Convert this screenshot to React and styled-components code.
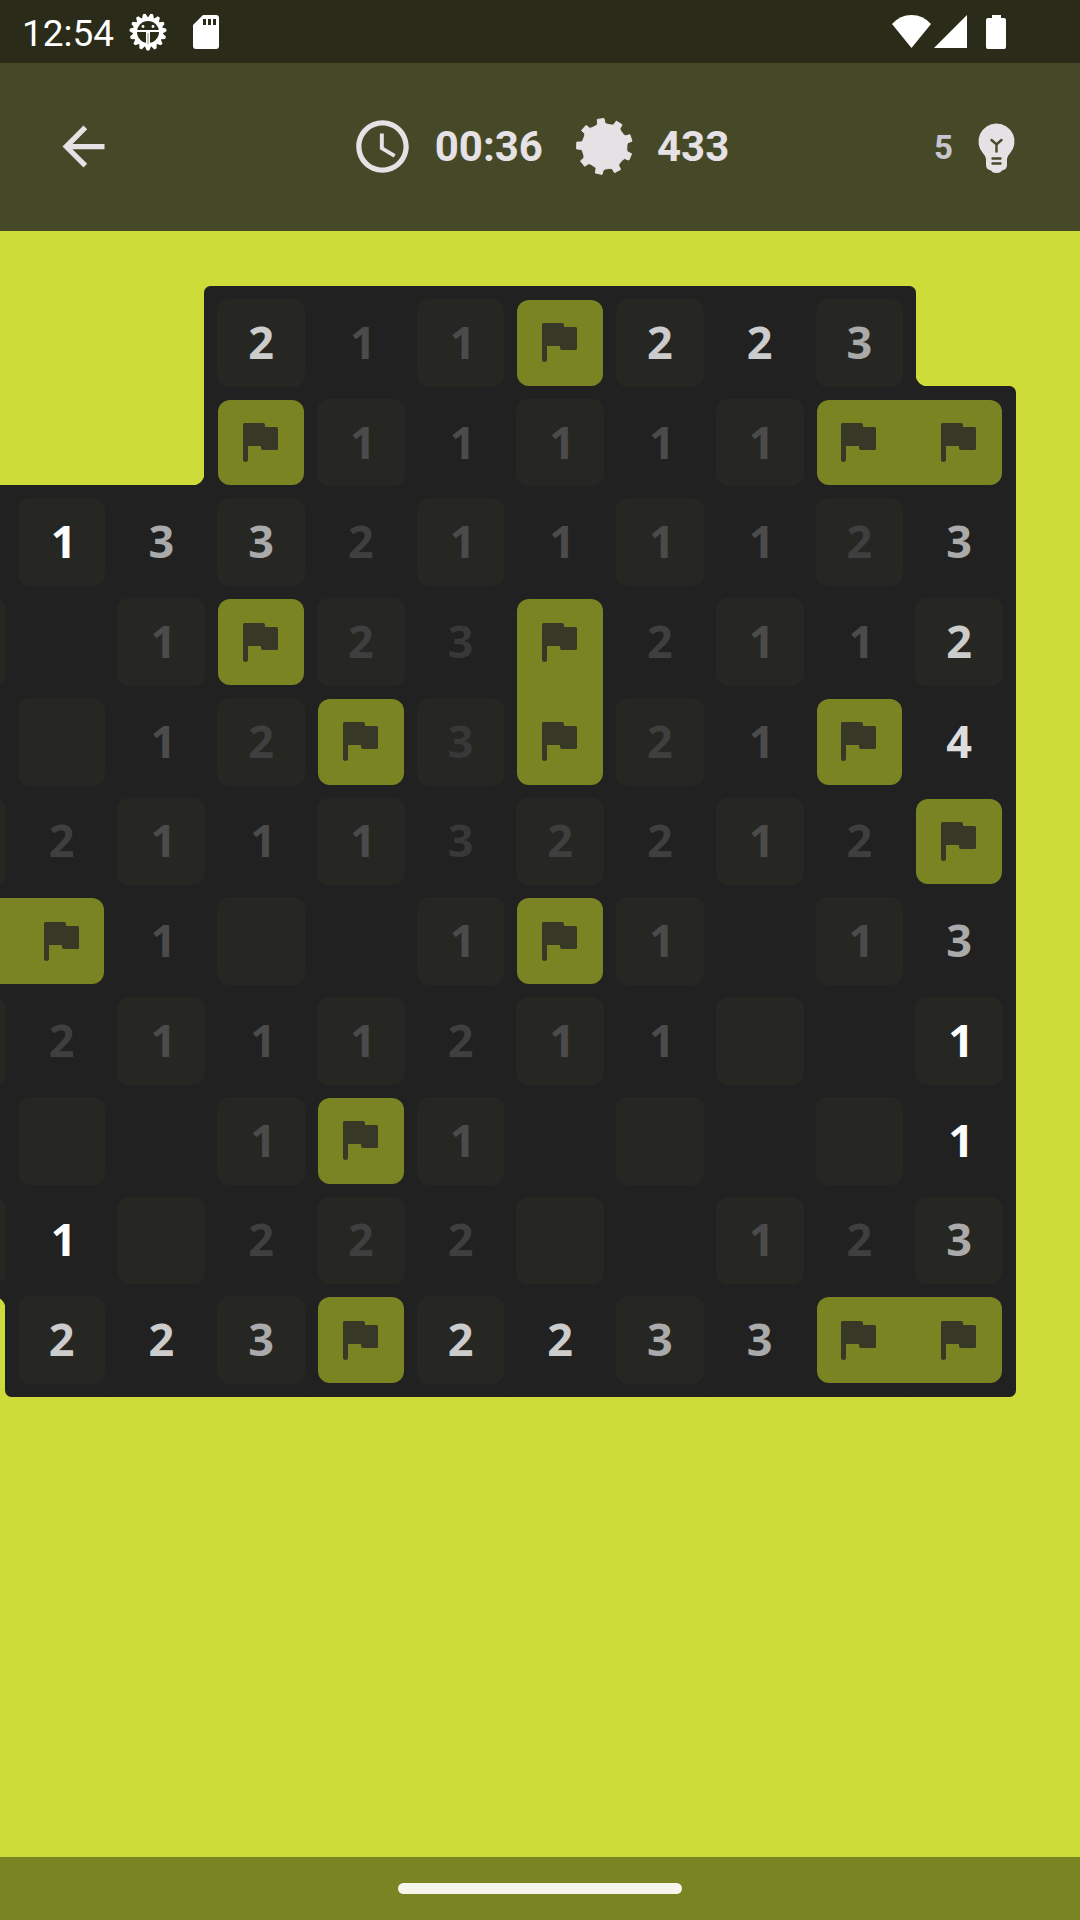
import React from "react";
import styled, { createGlobalStyle, css } from "styled-components";

const DARK = "#212121";
const LIME = "#cddc39";
const INK = "#e6e1e5";

const GlobalStyle = createGlobalStyle`
  *, *::before, *::after { box-sizing: border-box; }
  body {
    margin: 0;
    background: ${LIME};
    font-family: Roboto, "Liberation Sans", sans-serif;
  }
  button {
    margin: 0;
    padding: 0;
    border: 0;
    background: none;
    font: inherit;
    color: inherit;
    cursor: pointer;
  }
  svg { display: block; flex: none; }
`;

const Screen = styled.div`
  display: flex;
  flex-direction: column;
  min-height: 100vh;
  background: ${LIME};
  overflow: hidden;
`;

const StatusBar = styled.div`
  display: flex;
  align-items: center;
  justify-content: space-between;
  height: 63px;
  padding: 0 74px 0 22px;
  background: #2a2b19;
  color: #fff;
`;

const StatusGroup = styled.div`
  display: flex;
  align-items: center;
  gap: ${(p) => p.$gap}px;
`;

const SystemTime = styled.time`
  font-size: 37px;
  line-height: 42px;
  padding-top: 4px;
`;

const Toolbar = styled.header`
  display: grid;
  grid-template-columns: 1fr auto 1fr;
  align-items: center;
  height: 168px;
  padding: 0 52px 2px;
  background: #454927;
  color: ${INK};
`;

const BackButton = styled.button`
  justify-self: start;
`;

const Stats = styled.div`
  display: flex;
  gap: 30px;
`;

const Stat = styled.div`
  display: flex;
  align-items: center;
  gap: 21px;
  font-size: 42px;
  line-height: 48px;
  font-weight: 700;
`;

const StatValue = styled.span`
  padding-top: 2px;
`;

const HintButton = styled.button`
  display: flex;
  align-items: center;
  justify-self: end;
  gap: 12px;
`;

const HintCount = styled.span`
  padding-top: 4px;
  font-size: 33px;
  line-height: 40px;
  font-weight: 700;
  color: #cac4d0;
`;

const Field = styled.main`
  flex: 1;
  padding: 62px 71px 62px 0;
`;

const Board = styled.div`
  display: grid;
  grid-template-columns: repeat(11, minmax(0, 1fr));
  grid-template-rows: repeat(11, minmax(0, 1fr));
  aspect-ratio: 1;
  margin-left: -88px;
`;

const Void = styled.div`
  display: flex;
  padding: 6px;
  align-items: ${(p) => (p.$corner && p.$corner.includes("bottom") ? "flex-end" : "flex-start")};
  justify-content: ${(p) => (p.$corner && p.$corner.includes("right") ? "flex-end" : "flex-start")};
`;

const opposite = {
  "bottom right": "left top",
  "bottom left": "right top",
  "top right": "left bottom",
};

const Fillet = styled.span`
  width: 13px;
  height: 13px;
  background: radial-gradient(
    circle at ${(p) => opposite[p.$corner]},
    transparent 12px,
    ${DARK} 13px
  );
`;

const Cell = styled.div`
  display: grid;
  background: ${DARK};
  border-radius: 2px;
  box-shadow: 0 0 0 7px ${DARK};
`;

const digitColors = {
  lit: { 1: "#ffffff", 2: "#cccccc", 3: "#aaaaaa", 4: "#dedede" },
  dim: { 1: "#4b4b4b", 2: "#3f3f3f", 3: "#383838" },
};

/* The 1 sits left in its advance width, so it gets padding to look centred. */
const NumberTile = styled.button`
  position: relative;
  z-index: 1;
  margin: 6px;
  border-radius: 12px;
  background: ${(p) => (p.$shaded ? "#262722" : "transparent")};
  color: ${(p) => digitColors[p.$lit ? "lit" : "dim"][p.$value]};
  font-family: "Open Sans", "Noto Sans", sans-serif;
  font-size: 45px;
  line-height: 58px;
  padding-bottom: 2px;
  padding-left: ${(p) => (p.$value === "1" ? 4 : 0)}px;
  font-weight: 700;
`;

const FlagTile = styled.button`
  position: relative;
  z-index: 1;
  display: grid;
  place-items: center;
  margin: 7px;
  border-radius: 12px;
  background: #7a8422;
  color: #383827;
  ${(p) => p.$join === "right" && css`
    margin-right: -1px;
    padding-right: 8px;
    border-top-right-radius: 0;
    border-bottom-right-radius: 0;
  `}
  ${(p) => p.$join === "left" && css`
    margin-left: 0;
    padding-left: 7px;
    border-top-left-radius: 0;
    border-bottom-left-radius: 0;
  `}
  ${(p) => p.$join === "down" && css`
    margin-bottom: -1px;
    padding-bottom: 8px;
    border-bottom-left-radius: 0;
    border-bottom-right-radius: 0;
  `}
  ${(p) => p.$join === "up" && css`
    margin-top: 0;
    padding-top: 7px;
    border-top-left-radius: 0;
    border-top-right-radius: 0;
  `}
`;

const NavBar = styled.footer`
  display: flex;
  justify-content: center;
  align-items: center;
  height: 63px;
  background: #7a8422;
`;

const HomeHandle = styled.span`
  width: 284px;
  height: 11px;
  border-radius: 6px;
  background: #f5f5ec;
`;

/* Points of a cog outline: each tooth is a list of [angle offset, radius]. */
const cogPoints = (cx, cy, teeth, start, profile) => {
  const step = 360 / teeth;
  const out = [];
  for (let i = 0; i < teeth; i += 1) {
    profile.forEach(([offset, r]) => {
      const a = ((start + i * step + offset) * Math.PI) / 180;
      out.push(`${(cx + r * Math.cos(a)).toFixed(2)},${(cy + r * Math.sin(a)).toFixed(2)}`);
    });
  }
  return out.join(" ");
};

const MineIcon = () => (
  <svg width="63" height="63" viewBox="0 0 63 63" fill="currentColor" stroke="currentColor" strokeLinejoin="round" aria-hidden="true">
    <polygon
      strokeWidth="1"
      points={cogPoints(31.5, 31.5, 9, -98, [[-14, 22.5], [-9, 23.5], [-7, 28], [7, 28], [9, 23.5], [14, 22.5]])}
    />
  </svg>
);

const ClockIcon = () => (
  <svg width="63" height="63" viewBox="0 0 24 24" fill="currentColor" aria-hidden="true">
    <path d="M11.99 2C6.47 2 2 6.48 2 12s4.47 10 9.99 10C17.52 22 22 17.52 22 12S17.52 2 11.99 2zM12 20c-4.42 0-8-3.58-8-8s3.58-8 8-8 8 3.58 8 8-3.58 8-8 8z" />
    <path d="M12.5 7H11v6l5.25 3.15.75-1.23-4.5-2.67z" />
  </svg>
);

const BackIcon = () => (
  <svg width="63" height="63" viewBox="0 0 24 24" fill="currentColor" aria-hidden="true">
    <path d="M20 11H7.83l5.59-5.59L12 4l-8 8 8 8 1.41-1.41L7.83 13H20v-2z" />
  </svg>
);

const BulbIcon = () => (
  <svg width="63" height="63" viewBox="0 0 63 63" aria-hidden="true">
    <path
      fill="currentColor"
      d="M31.500 8.500a18 18 0 0 1 13.200 30.300Q42 41.500 42 44v6q0 4.500-5 5.500-1.500 2.500-5.500 2.500t-5.500-2.500q-5-1-5-5.500v-6q0-2.500-2.700-5.200A18 18 0 0 1 31.500 8.500z"
    />
    <path
      d="M26.500 25l5 4.500 5-4.500M31.500 29.500v7M27.500 43.500h8M27.500 48.500h8"
      fill="none"
      stroke="#454927"
      strokeWidth="2.400"
      strokeLinecap="round"
    />
  </svg>
);

const FlagIcon = () => (
  <svg width="36" height="39" viewBox="0 0 36 39" fill="currentColor" aria-hidden="true">
    <path d="M1.500 0H20q2 0 2 2v2H33.500q1.500 0 1.500 1.500v20q0 1.500-1.500 1.500H20q-2 0-2-2v-2H5v14q0 2-2.500 2T0 37V1.500Q0 0 1.500 0z" />
  </svg>
);

const DebugIcon = () => (
  <svg width="38" height="38" viewBox="0 0 38 38" aria-hidden="true">
    <polygon fill="currentColor" points={cogPoints(19, 19, 15, 90, [[-11, 15], [-4, 18.5], [4, 18.5], [11, 15]])} />
    <circle cx="19" cy="19" r="11" fill="#2a2b19" />
    <path d="M7 18h24" stroke="currentColor" strokeWidth="2" />
    <path d="M19 19v12" stroke="currentColor" strokeWidth="4" />
    <path d="M19 20v11" stroke="#8f8f87" strokeWidth="1" />
    <circle cx="14" cy="13.500" r="1.400" fill="currentColor" />
    <circle cx="24" cy="13.500" r="1.400" fill="currentColor" />
  </svg>
);

const CardIcon = () => (
  <svg width="26" height="34" viewBox="0 0 26 34" aria-hidden="true">
    <path fill="currentColor" d="M10 0H23q3 0 3 3v28q0 3-3 3H3q-3 0-3-3V10z" />
    <path stroke="#2a2b19" strokeWidth="3" d="M11.500 4v6M16.500 4v6M21.500 4v6" />
  </svg>
);

const WifiIcon = () => (
  <svg width="39" height="34" viewBox="0 0 39 34" fill="currentColor" aria-hidden="true">
    <path d="M0 9Q8 0 19.500 0T39 9L19.500 33z" />
  </svg>
);

const SignalIcon = () => (
  <svg width="33" height="34" viewBox="0 0 33 34" fill="currentColor" aria-hidden="true">
    <path d="M0 33L33 0v33z" />
  </svg>
);

const BatteryIcon = () => (
  <svg width="20" height="34" viewBox="0 0 20 34" fill="currentColor" aria-hidden="true">
    <path d="M6 0h9v3h3q2 0 2 2v27q0 2-2 2H2q-2 0-2-2V5q0-2 2-2h4z" />
  </svg>
);

/*
 * Rows of the level. "#" is outside the board, "." an opened blank,
 * "*" a flag; flags that touch are < > side by side and ^ v stacked.
 * A "!" after a number means that it is still lit.
 */
const LEVEL = [
  "# # # 2! 1 1 * 2! 2! 3! #",
  "# # # * 1 1 1 1 1 < >",
  ". 1! 3! 3! 2 1 1 1 1 2 3!",
  ". . 1 * 2 3 ^ 2 1 1 2!",
  ". . 1 2 * 3 v 2 1 * 4!",
  ". 2 1 1 1 3 2 2 1 2 *",
  "< > 1 . . 1 * 1 . 1 3!",
  ". 2 1 1 1 2 1 1 . . 1!",
  ". . . 1 * 1 . . . . 1!",
  ". 1! . 2 2 2 . . 1 2 3!",
  "# 2! 2! 3! * 2! 2! 3! 3! < >",
].map((row) => row.split(" "));

const JOINS = { "<": "right", ">": "left", "^": "down", v: "up" };

const CORNERS = {
  "1-2": "bottom right",
  "0-10": "bottom left",
  "10-0": "top right",
};

const Square = ({ code, row, col }) => {
  if (code === "#") {
    const corner = CORNERS[`${row}-${col}`];
    return <Void $corner={corner}>{corner && <Fillet $corner={corner} />}</Void>;
  }
  if (code === "*" || JOINS[code]) {
    return (
      <Cell>
        <FlagTile type="button" $join={JOINS[code]} aria-label="Flag">
          <FlagIcon />
        </FlagTile>
      </Cell>
    );
  }
  const value = code === "." ? "" : code[0];
  return (
    <Cell>
      <NumberTile
        type="button"
        $value={value}
        $lit={code.endsWith("!")}
        $shaded={(row + col) % 2 === 1}
        aria-label={value || "Blank"}
      >
        {value}
      </NumberTile>
    </Cell>
  );
};

export default function App() {
  return (
    <Screen>
      <GlobalStyle />
      <StatusBar>
        <StatusGroup $gap={15}>
          <SystemTime>12:54</SystemTime>
          <StatusGroup $gap={26}>
            <DebugIcon />
            <CardIcon />
          </StatusGroup>
        </StatusGroup>
        <StatusGroup $gap={19}>
          <StatusGroup $gap={3}>
            <WifiIcon />
            <SignalIcon />
          </StatusGroup>
          <BatteryIcon />
        </StatusGroup>
      </StatusBar>
      <Toolbar>
        <BackButton type="button" aria-label="Back">
          <BackIcon />
        </BackButton>
        <Stats>
          <Stat>
            <ClockIcon />
            <StatValue>00:36</StatValue>
          </Stat>
          <Stat>
            <MineIcon />
            <StatValue>433</StatValue>
          </Stat>
        </Stats>
        <HintButton type="button">
          <HintCount>5</HintCount>
          <BulbIcon />
        </HintButton>
      </Toolbar>
      <Field>
        <Board>
          {LEVEL.map((cells, row) =>
            cells.map((code, col) => (
              <Square key={`${row}-${col}`} code={code} row={row} col={col} />
            ))
          )}
        </Board>
      </Field>
      <NavBar>
        <HomeHandle />
      </NavBar>
    </Screen>
  );
}
